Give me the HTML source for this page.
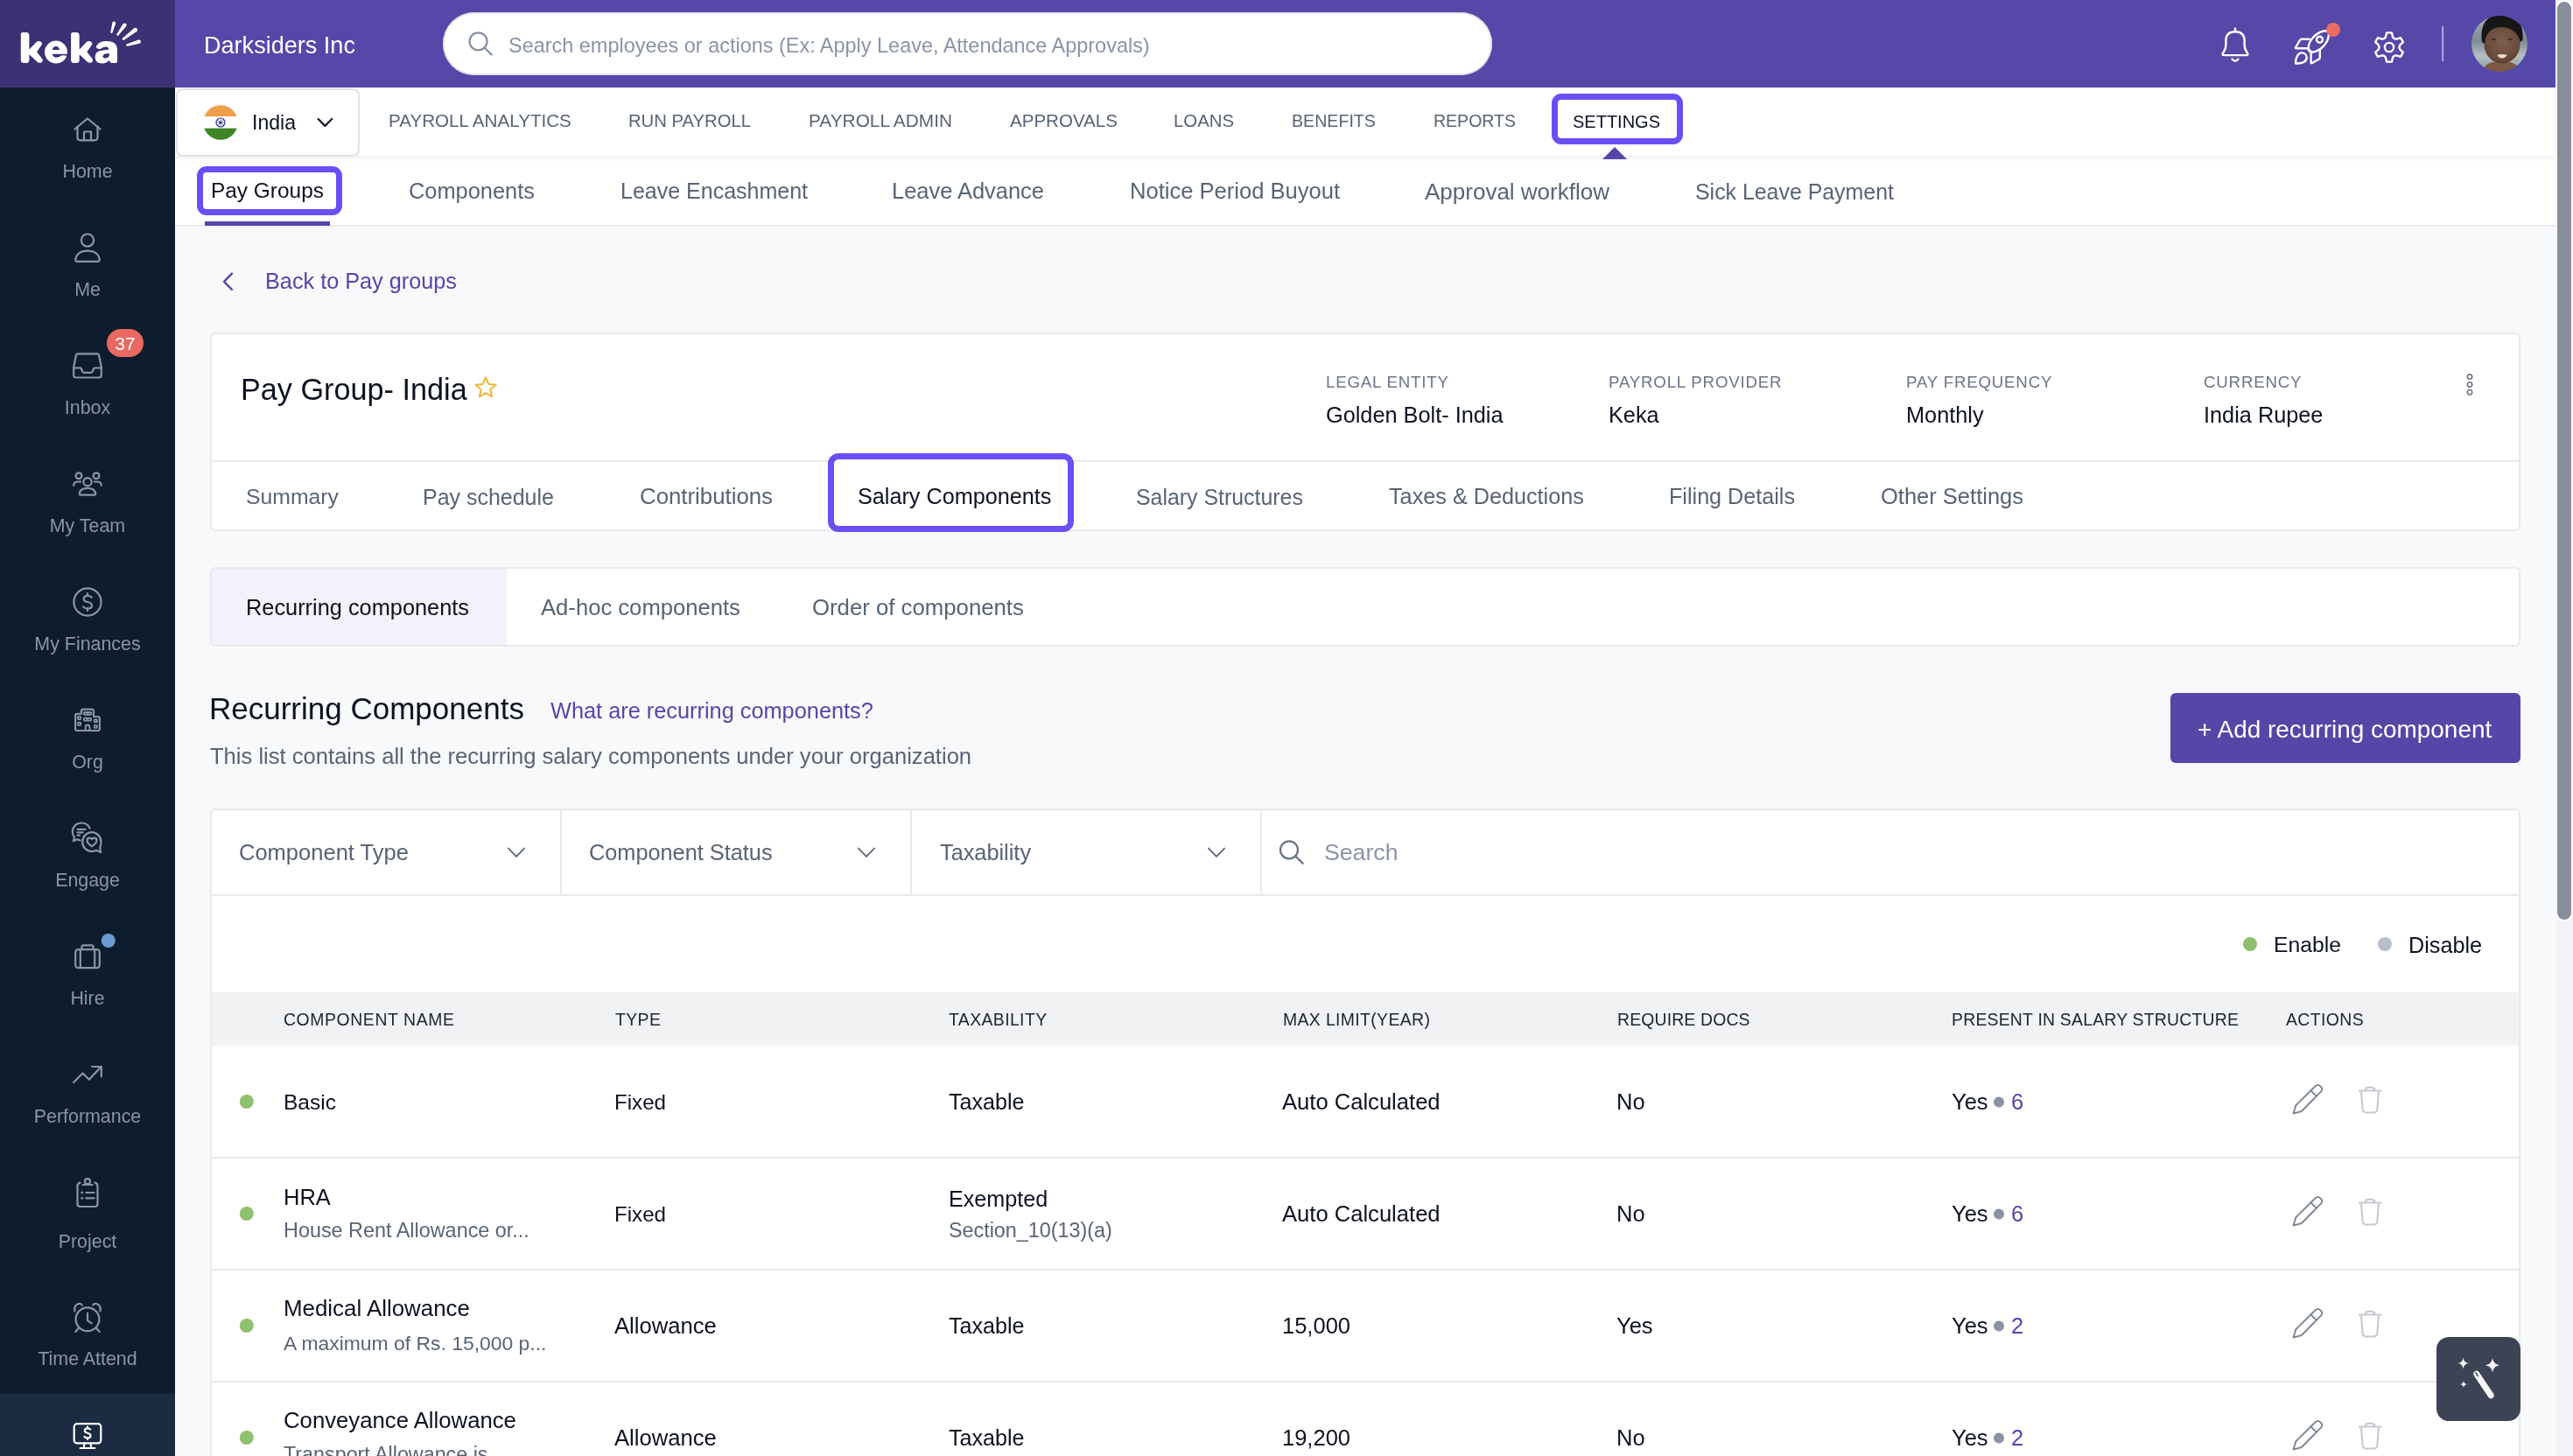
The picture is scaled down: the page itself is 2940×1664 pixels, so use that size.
<!DOCTYPE html>
<html><head><meta charset="utf-8"><title>Keka Payroll Settings</title>
<style>
html,body{margin:0;padding:0;}
body{width:2940px;height:1664px;overflow:hidden;position:relative;font-family:"Liberation Sans",sans-serif;background:#f8f9fb;}
.t{position:absolute;line-height:1;white-space:nowrap;will-change:transform;}
.r{position:absolute;}
.ov{position:absolute;left:0;top:0;z-index:5;pointer-events:none;}
</style></head><body>
<div class="r" style="left:0px;top:0px;width:2940px;height:1664px;background:#f8f9fb;"></div><div class="r" style="left:0px;top:0px;width:200px;height:1664px;background:#0e1d2d;"></div><div class="r" style="left:0px;top:0px;width:200px;height:100px;background:#3c3175;"></div><div class="r" style="left:0px;top:1593px;width:200px;height:71px;background:#1a2b42;"></div><div class="r" style="left:200px;top:0px;width:2720px;height:100px;background:#5548a8;"></div><div class="r" style="left:200px;top:100px;width:2720px;height:78px;background:#ffffff;box-shadow:0 3px 6px rgba(20,30,50,0.07);z-index:1"></div><div class="r" style="left:200px;top:178px;width:2720px;height:81px;background:#ffffff;border-bottom:2px solid #e8eaee;box-sizing:border-box"></div><div class="r" style="left:2920px;top:0px;width:20px;height:1664px;background:#f2f3f6;"></div><div class="r" style="left:2920px;top:0px;width:20px;height:1053px;background:#878e9c;border-radius:10px;border:2px solid #ffffff;box-sizing:border-box"></div><div class="t" style="left:232.8px;top:37.7px;font-size:27.07px;color:#ffffff;">Darksiders Inc</div><div class="r" style="left:506px;top:14px;width:1199px;height:72px;background:#fff;border-radius:36px;box-shadow:inset 0 0 0 1.5px #d9dbe3"></div><div class="t" style="left:581.3px;top:40.7px;font-size:23.46px;color:#8a94a5;">Search employees or actions (Ex: Apply Leave, Attendance Approvals)</div><div class="r" style="left:201px;top:101px;width:210px;height:78px;background:#fff;border:2px solid #dfe1e6;border-radius:8px;box-sizing:border-box;z-index:2"></div><div class="t" style="left:288.0px;top:128.5px;font-size:23.06px;color:#0d1220;z-index:3">India</div><div class="t" style="left:443.5px;top:128.1px;font-size:20.62px;color:#586474;z-index:3">PAYROLL ANALYTICS</div><div class="t" style="left:718.2px;top:128.4px;font-size:20.26px;color:#586474;z-index:3">RUN PAYROLL</div><div class="t" style="left:924.4px;top:128.0px;font-size:20.83px;color:#586474;z-index:3">PAYROLL ADMIN</div><div class="t" style="left:1154.0px;top:128.2px;font-size:20.56px;color:#586474;z-index:3">APPROVALS</div><div class="t" style="left:1341.4px;top:128.4px;font-size:20.35px;color:#586474;z-index:3">LOANS</div><div class="t" style="left:1476.0px;top:129.0px;font-size:19.63px;color:#586474;z-index:3">BENEFITS</div><div class="t" style="left:1637.8px;top:129.1px;font-size:19.52px;color:#586474;z-index:3">REPORTS</div><div class="r" style="left:1773px;top:107px;width:150px;height:58px;border:7.5px solid #6b4ef6;border-radius:11px;box-sizing:border-box;z-index:3"></div><div class="t" style="left:1796.5px;top:128.7px;font-size:20.00px;color:#0d1220;z-index:3">SETTINGS</div><div class="r" style="left:225px;top:190px;width:166px;height:56px;border:7.5px solid #6b4ef6;border-radius:11px;box-sizing:border-box"></div><div class="r" style="left:234px;top:253px;width:143px;height:5px;background:#5546a8;"></div><div class="t" style="left:240.5px;top:206.3px;font-size:24.43px;color:#0d1220;">Pay Groups</div><div class="t" style="left:466.5px;top:206.1px;font-size:25.40px;color:#586474;">Components</div><div class="t" style="left:708.5px;top:206.4px;font-size:25.00px;color:#586474;">Leave Encashment</div><div class="t" style="left:1019.1px;top:206.1px;font-size:25.44px;color:#586474;">Leave Advance</div><div class="t" style="left:1290.7px;top:206.0px;font-size:25.55px;color:#586474;">Notice Period Buyout</div><div class="t" style="left:1628.3px;top:205.6px;font-size:26.00px;color:#586474;">Approval workflow</div><div class="t" style="left:1936.8px;top:206.5px;font-size:24.90px;color:#586474;">Sick Leave Payment</div><div class="t" style="left:303.0px;top:309.0px;font-size:25.26px;color:#5546a8;">Back to Pay groups</div><div class="r" style="left:240px;top:380px;width:2640px;height:227px;background:#fff;border:2px solid #e7e9ed;border-radius:6px;box-sizing:border-box"></div><div class="r" style="left:242px;top:526px;width:2636px;height:2px;background:#e7e9ed;"></div><div class="t" style="left:274.5px;top:427.5px;font-size:34.22px;color:#0d1220;">Pay Group- India</div><div class="t" style="left:1514.6px;top:427.5px;font-size:18.70px;color:#6b7584;letter-spacing:0.8px;">LEGAL ENTITY</div><div class="t" style="left:1514.6px;top:461.8px;font-size:25.30px;color:#0d1220;">Golden Bolt- India</div><div class="t" style="left:1838.0px;top:427.5px;font-size:18.70px;color:#6b7584;letter-spacing:0.8px;">PAYROLL PROVIDER</div><div class="t" style="left:1838.0px;top:461.8px;font-size:25.30px;color:#0d1220;">Keka</div><div class="t" style="left:2178.0px;top:427.5px;font-size:18.70px;color:#6b7584;letter-spacing:0.8px;">PAY FREQUENCY</div><div class="t" style="left:2178.0px;top:461.8px;font-size:25.30px;color:#0d1220;">Monthly</div><div class="t" style="left:2518.0px;top:427.5px;font-size:18.70px;color:#6b7584;letter-spacing:0.8px;">CURRENCY</div><div class="t" style="left:2518.0px;top:461.8px;font-size:25.30px;color:#0d1220;">India Rupee</div><div class="t" style="left:280.7px;top:555.6px;font-size:24.78px;color:#586474;">Summary</div><div class="t" style="left:483.1px;top:555.5px;font-size:24.98px;color:#586474;">Pay schedule</div><div class="t" style="left:730.7px;top:554.8px;font-size:25.80px;color:#586474;">Contributions</div><div class="t" style="left:1298.3px;top:555.5px;font-size:24.90px;color:#586474;">Salary Structures</div><div class="t" style="left:1586.6px;top:555.2px;font-size:25.23px;color:#586474;">Taxes &amp; Deductions</div><div class="t" style="left:1906.8px;top:555.3px;font-size:25.16px;color:#586474;">Filing Details</div><div class="t" style="left:2148.5px;top:555.0px;font-size:25.50px;color:#586474;">Other Settings</div><div class="r" style="left:946.2px;top:518px;width:280.4px;height:90px;background:#fff;border:7.5px solid #6b4ef6;border-radius:12px;box-sizing:border-box"></div><div class="t" style="left:979.5px;top:555.3px;font-size:25.22px;color:#0d1220;">Salary Components</div><div class="r" style="left:240px;top:648px;width:2640px;height:91px;background:#fff;border:2px solid #e7e9ed;border-radius:6px;box-sizing:border-box;overflow:hidden"><div style="position:absolute;left:0;top:0;width:337px;height:100%;background:#f4f0fc"></div></div><div class="t" style="left:281.3px;top:682.3px;font-size:25.35px;color:#0d1220;">Recurring components</div><div class="t" style="left:618.2px;top:682.1px;font-size:25.64px;color:#586474;">Ad-hoc components</div><div class="t" style="left:928.4px;top:682.0px;font-size:25.76px;color:#586474;">Order of components</div><div class="t" style="left:239.0px;top:792.0px;font-size:35.01px;color:#0d1220;">Recurring Components</div><div class="t" style="left:628.5px;top:800.2px;font-size:25.34px;color:#5546a8;">What are recurring components?</div><div class="t" style="left:239.5px;top:852.0px;font-size:25.58px;color:#586474;">This list contains all the recurring salary components under your organization</div><div class="r" style="left:2480px;top:792px;width:400px;height:80px;background:#5546a8;border-radius:6px"></div><div class="t" style="left:2510.5px;top:819.5px;font-size:27.95px;color:#ffffff;">+ Add recurring component</div><div class="r" style="left:240px;top:924px;width:2640px;height:800px;background:#fff;border:2px solid #e7e9ed;border-radius:6px;box-sizing:border-box"></div><div class="r" style="left:242px;top:1022px;width:2636px;height:2px;background:#e7e9ed;"></div><div class="r" style="left:640px;top:926px;width:2px;height:96px;background:#e7e9ed;"></div><div class="r" style="left:1040px;top:926px;width:2px;height:96px;background:#e7e9ed;"></div><div class="r" style="left:1440px;top:926px;width:2px;height:96px;background:#e7e9ed;"></div><div class="t" style="left:273.3px;top:962.1px;font-size:25.53px;color:#586474;">Component Type</div><div class="t" style="left:673.2px;top:962.3px;font-size:25.31px;color:#586474;">Component Status</div><div class="t" style="left:1073.6px;top:962.3px;font-size:25.30px;color:#586474;">Taxability</div><div class="t" style="left:1513.0px;top:961.1px;font-size:26.67px;color:#8a94a5;">Search</div><div class="t" style="left:2598.0px;top:1068.3px;font-size:24.73px;color:#0d1220;">Enable</div><div class="t" style="left:2752.0px;top:1067.9px;font-size:25.19px;color:#0d1220;">Disable</div><div class="r" style="left:242px;top:1134px;width:2636px;height:61px;background:#f1f2f4;"></div><div class="t" style="left:323.9px;top:1156.4px;font-size:19.40px;color:#1c2330;letter-spacing:0.6px;">COMPONENT NAME</div><div class="t" style="left:702.5px;top:1156.4px;font-size:19.40px;color:#1c2330;letter-spacing:0.4px;">TYPE</div><div class="t" style="left:1083.5px;top:1156.4px;font-size:19.40px;color:#1c2330;letter-spacing:0.4px;">TAXABILITY</div><div class="t" style="left:1465.5px;top:1156.4px;font-size:19.40px;color:#1c2330;letter-spacing:0.37px;">MAX LIMIT(YEAR)</div><div class="t" style="left:1847.5px;top:1156.4px;font-size:19.40px;color:#1c2330;letter-spacing:0.16px;">REQUIRE DOCS</div><div class="t" style="left:2229.5px;top:1156.4px;font-size:19.40px;color:#1c2330;letter-spacing:0.22px;">PRESENT IN SALARY STRUCTURE</div><div class="t" style="left:2611.5px;top:1156.4px;font-size:19.40px;color:#1c2330;letter-spacing:0.4px;">ACTIONS</div><div class="t" style="left:323.5px;top:1247.5px;font-size:24.54px;color:#0d1220;">Basic</div><div class="t" style="left:702.0px;top:1248.1px;font-size:24.13px;color:#0d1220;">Fixed</div><div class="t" style="left:1084.0px;top:1247.3px;font-size:25.07px;color:#0d1220;">Taxable</div><div class="t" style="left:1465.0px;top:1246.8px;font-size:25.59px;color:#0d1220;">Auto Calculated</div><div class="t" style="left:1847.0px;top:1246.9px;font-size:25.50px;color:#0d1220;">No</div><div class="t" style="left:2230.0px;top:1246.9px;font-size:25.50px;color:#0d1220;">Yes</div><div class="t" style="left:2298.2px;top:1246.9px;font-size:25.50px;color:#5546a8;">6</div><div class="r" style="left:242px;top:1322px;width:2636px;height:2px;background:#e7e9ed;"></div><div class="t" style="left:323.5px;top:1355.6px;font-size:25.50px;color:#0d1220;">HRA</div><div class="t" style="left:323.5px;top:1395.2px;font-size:23.40px;color:#586474;">House Rent Allowance or...</div><div class="t" style="left:702.0px;top:1376.1px;font-size:24.13px;color:#0d1220;">Fixed</div><div class="t" style="left:1084.0px;top:1357.9px;font-size:25.16px;color:#0d1220;">Exempted</div><div class="t" style="left:1084.0px;top:1395.2px;font-size:23.34px;color:#586474;">Section_10(13)(a)</div><div class="t" style="left:1465.0px;top:1374.8px;font-size:25.59px;color:#0d1220;">Auto Calculated</div><div class="t" style="left:1847.0px;top:1374.9px;font-size:25.50px;color:#0d1220;">No</div><div class="t" style="left:2230.0px;top:1374.9px;font-size:25.50px;color:#0d1220;">Yes</div><div class="t" style="left:2298.2px;top:1374.9px;font-size:25.50px;color:#5546a8;">6</div><div class="r" style="left:242px;top:1450px;width:2636px;height:2px;background:#e7e9ed;"></div><div class="t" style="left:323.5px;top:1483.3px;font-size:25.89px;color:#0d1220;">Medical Allowance</div><div class="t" style="left:323.5px;top:1523.6px;font-size:22.92px;color:#586474;">A maximum of Rs. 15,000 p...</div><div class="t" style="left:702.0px;top:1502.8px;font-size:25.60px;color:#0d1220;">Allowance</div><div class="t" style="left:1084.0px;top:1503.3px;font-size:25.07px;color:#0d1220;">Taxable</div><div class="t" style="left:1465.0px;top:1502.9px;font-size:25.50px;color:#0d1220;">15,000</div><div class="t" style="left:1847.0px;top:1502.9px;font-size:25.50px;color:#0d1220;">Yes</div><div class="t" style="left:2230.0px;top:1502.9px;font-size:25.50px;color:#0d1220;">Yes</div><div class="t" style="left:2298.2px;top:1502.9px;font-size:25.50px;color:#5546a8;">2</div><div class="r" style="left:242px;top:1578px;width:2636px;height:2px;background:#e7e9ed;"></div><div class="t" style="left:323.5px;top:1611.4px;font-size:25.73px;color:#0d1220;">Conveyance Allowance</div><div class="t" style="left:323.5px;top:1651.3px;font-size:23.30px;color:#586474;">Transport Allowance is...</div><div class="t" style="left:702.0px;top:1630.8px;font-size:25.60px;color:#0d1220;">Allowance</div><div class="t" style="left:1084.0px;top:1631.3px;font-size:25.07px;color:#0d1220;">Taxable</div><div class="t" style="left:1465.0px;top:1630.9px;font-size:25.50px;color:#0d1220;">19,200</div><div class="t" style="left:1847.0px;top:1630.9px;font-size:25.50px;color:#0d1220;">No</div><div class="t" style="left:2230.0px;top:1630.9px;font-size:25.50px;color:#0d1220;">Yes</div><div class="t" style="left:2298.2px;top:1630.9px;font-size:25.50px;color:#5546a8;">2</div><div class="t" style="left:0.0px;width:200px;text-align:center;top:185.9px;font-size:21.4px;color:#8a94a4;letter-spacing:0px;">Home</div><div class="t" style="left:0.0px;width:200px;text-align:center;top:320.7px;font-size:21.4px;color:#8a94a4;letter-spacing:0px;">Me</div><div class="t" style="left:0.0px;width:200px;text-align:center;top:455.7px;font-size:21.4px;color:#8a94a4;letter-spacing:0px;">Inbox</div><div class="t" style="left:0.0px;width:200px;text-align:center;top:590.7px;font-size:21.4px;color:#8a94a4;letter-spacing:0px;">My Team</div><div class="t" style="left:0.0px;width:200px;text-align:center;top:725.7px;font-size:21.4px;color:#8a94a4;letter-spacing:0px;">My Finances</div><div class="t" style="left:0.0px;width:200px;text-align:center;top:861.2px;font-size:21.4px;color:#8a94a4;letter-spacing:0px;">Org</div><div class="t" style="left:0.0px;width:200px;text-align:center;top:995.7px;font-size:21.4px;color:#8a94a4;letter-spacing:0px;">Engage</div><div class="t" style="left:0.0px;width:200px;text-align:center;top:1130.7px;font-size:21.4px;color:#8a94a4;letter-spacing:0px;">Hire</div><div class="t" style="left:0.0px;width:200px;text-align:center;top:1265.7px;font-size:21.4px;color:#8a94a4;letter-spacing:0px;">Performance</div><div class="t" style="left:0.0px;width:200px;text-align:center;top:1408.7px;font-size:21.4px;color:#8a94a4;letter-spacing:0px;">Project</div><div class="t" style="left:0.0px;width:200px;text-align:center;top:1543.2px;font-size:21.4px;color:#8a94a4;letter-spacing:0px;">Time Attend</div><div class="r" style="left:122px;top:376px;width:42px;height:32px;background:#e8695f;border-radius:16px"></div><div class="t" style="left:122.0px;width:42px;text-align:center;top:382.2px;font-size:21px;color:#ffffff;letter-spacing:0px;">37</div>
<svg class="ov" width="2940" height="1664" viewBox="0 0 2940 1664"><g fill="none" stroke="#8c95a5" stroke-width="2.2" stroke-linecap="round" stroke-linejoin="round"><path d="M85.5,147.5 L100,135.5 L114.5,147.5"/><path d="M88.5,144.5 V157 Q88.5,160.3 91.8,160.3 H108.2 Q111.5,160.3 111.5,157 V144.5"/><path d="M96,160.3 V150.5 H104 V160.3"/></g><g fill="none" stroke="#8c95a5" stroke-width="2.2" stroke-linecap="round" stroke-linejoin="round"><circle cx="100" cy="274.6" r="7.1"/><path d="M86.3,296.5 C87,290.5 92,286.7 100,286.7 C108,286.7 113,290.5 113.7,296.5 Q114,298.9 111.6,298.9 H88.4 Q86,298.9 86.3,296.5 Z"/></g><g fill="none" stroke="#8c95a5" stroke-width="2.2" stroke-linecap="round" stroke-linejoin="round"><path d="M88.5,404.3 H111.5 Q112.6,404.3 112.9,405.4 L115.8,419.5 V429 Q115.8,431.5 113.3,431.5 H86.7 Q84.2,431.5 84.2,429 V419.5 L87.1,405.4 Q87.4,404.3 88.5,404.3 Z"/><path d="M84.2,420.5 H92.5 L94.2,424.5 Q94.8,425.8 96.2,425.8 H103.8 Q105.2,425.8 105.8,424.5 L107.5,420.5 H115.8"/></g><g fill="none" stroke="#8c95a5" stroke-width="2.2" stroke-linecap="round" stroke-linejoin="round"><circle cx="100" cy="550.8" r="4.6"/><path d="M90.8,564 C91.5,559.5 95,557.8 100,557.8 C105,557.8 108.5,559.5 109.2,564 Q109.4,565.6 107.8,565.6 H92.2 Q90.6,565.6 90.8,564 Z"/><circle cx="90" cy="543.8" r="3.4"/><circle cx="110" cy="543.8" r="3.4"/><path d="M84.2,554.8 Q84.2,550.5 89.5,550.5 H92.2"/><path d="M115.8,554.8 Q115.8,550.5 110.5,550.5 H107.8"/></g><g fill="none" stroke="#8c95a5" stroke-width="2.2" stroke-linecap="round" stroke-linejoin="round"><circle cx="100" cy="688" r="15.6"/><path d="M104.6,682.6 Q103,680.8 100,680.8 Q95.6,680.8 95.6,684.4 Q95.6,687 100.2,688 Q105,689 105,692.2 Q105,695.4 100,695.4 Q96.6,695.4 95,693.4"/><path d="M100,678.2 V680.8 M100,695.4 V698"/></g><g fill="none" stroke="#8c95a5" stroke-width="2.2" stroke-linecap="round" stroke-linejoin="round"><path d="M86.1,832.8 V818 Q86.1,815.8 88.3,815.8 H93 V813 Q93,810.7 95.3,810.7 H104.7 Q107,810.7 107,813 V819 H111.7 Q113.9,819 113.9,821.2 V832.8 Q113.9,835 111.7,835 H88.3 Q86.1,835 86.1,832.8 Z"/></g><g fill="none" stroke="#8c95a5" stroke-width="1.9" stroke-linejoin="round"><rect x="89" y="818.9" width="3.2" height="3.2" rx="0.8"/><rect x="89" y="825.6" width="3.2" height="3.2" rx="0.8"/><rect x="95.9" y="814" width="8.2" height="2.8" rx="0.8"/><rect x="95.9" y="820.7" width="8.2" height="2.9" rx="0.8"/><path d="M100,814 V816.8 M100,820.7 V823.6"/><rect x="107.8" y="822.2" width="3.1" height="3.1" rx="0.8"/><rect x="107.8" y="828.9" width="3.1" height="3" rx="0.8"/><path d="M97.6,835 V831 Q97.6,828.5 100,828.5 Q102.4,828.5 102.4,831 V835"/></g><g fill="none" stroke="#8c95a5" stroke-width="2.2" stroke-linecap="round" stroke-linejoin="round"><path d="M102.5,946.5 C100.8,942.5 97,940.5 93,940.5 C87,940.5 82.8,945 82.8,950.5 C82.8,953 83.6,955.2 85,957 L83.8,961.3 L88.5,959.2 L91.5,960.5"/><path d="M88.5,947.8 H97.5 M88.5,951.4 H94.5 M88.5,954.6 H91"/><path d="M115.5,962.2 C115.5,956 110.7,951.2 105,951.2 C99,951.2 94.2,956 94.2,962.2 C94.2,968.3 99,973 105,973 C107,973 108.7,972.6 110.2,971.7 L115.2,974 L114,968.8 C115,967 115.5,964.7 115.5,962.2 Z"/><path d="M105,967.2 C101,964.8 99.5,962.8 99.5,960.6 C99.5,958.8 100.9,957.6 102.4,957.6 C103.6,957.6 104.4,958.3 105,959.2 C105.6,958.3 106.4,957.6 107.6,957.6 C109.1,957.6 110.5,958.8 110.5,960.6 C110.5,962.8 109,964.8 105,967.2 Z"/></g><g fill="none" stroke="#8c95a5" stroke-width="2.2" stroke-linecap="round" stroke-linejoin="round"><rect x="86.2" y="1085.2" width="27.6" height="21" rx="3.2"/><path d="M93.4,1085 V1082.2 Q93.4,1080.3 95.3,1080.3 H104.7 Q106.6,1080.3 106.6,1082.2 V1085"/><path d="M91.8,1085.5 V1106 M108.2,1085.5 V1106"/></g><circle cx="123.8" cy="1075" r="8" fill="#6a9bd1"/><g fill="none" stroke="#8c95a5" stroke-width="2.2" stroke-linecap="round" stroke-linejoin="round"><path d="M84.2,1237 L94.5,1226.6 L101.8,1233.8 L115.4,1219.2"/><path d="M105.2,1219 H115.8 V1230.3"/></g><g fill="none" stroke="#8c95a5" stroke-width="2.2" stroke-linecap="round" stroke-linejoin="round"><path d="M91.5,1351.6 Q88.5,1352.2 88.5,1355.5 V1375.8 Q88.5,1379 91.7,1379 H108.3 Q111.5,1379 111.5,1375.8 V1355.5 Q111.5,1352.2 108.5,1351.6"/><circle cx="100" cy="1350.2" r="3"/><path d="M94.5,1354 H105.5"/><path d="M98.3,1363 H107.6 M98.3,1369.3 H107.6"/></g><circle cx="93.7" cy="1363" r="1.4" fill="#8c95a5"/><circle cx="93.7" cy="1369.3" r="1.4" fill="#8c95a5"/><g fill="none" stroke="#8c95a5" stroke-width="2.2" stroke-linecap="round" stroke-linejoin="round"><circle cx="100" cy="1507.8" r="13.4"/><path d="M100,1500.6 V1509.2 L104.6,1512.4"/><path d="M85.4,1498.4 Q84,1491.5 90.5,1489.8 Q92.5,1489.6 93.8,1491.5"/><path d="M114.6,1498.4 Q116,1491.5 109.5,1489.8 Q107.5,1489.6 106.2,1491.5"/><path d="M90.4,1517.6 L86.2,1522 M109.6,1517.6 L113.8,1522"/></g><g fill="none" stroke="#ffffff" stroke-width="2.2" stroke-linecap="round" stroke-linejoin="round"><rect x="84.7" y="1627.2" width="30.6" height="22.2" rx="3.4"/><path d="M96.6,1649.6 L95.6,1654.6 M103.4,1649.6 L104.4,1654.6 M91.6,1655 H108.4"/><path d="M103.2,1633.6 Q102.2,1632.3 100,1632.3 Q96.8,1632.3 96.8,1635 Q96.8,1637 100.1,1637.8 Q103.5,1638.6 103.5,1641 Q103.5,1643.3 100,1643.3 Q97.6,1643.3 96.5,1642 M100,1630.6 V1632.3 M100,1643.3 V1645"/></g><g fill="#ffffff"><path d="M26,37.1 H30 Q33.4,37.1 33.4,41 V56.4 L41.4,48.3 Q43.6,46.3 46.3,47.4 Q48.8,48.8 47.6,51.2 L42.1,59.3 L48.4,67.6 Q49.6,70 47.2,71.4 Q44.5,72.6 42.3,70.4 L33.4,62.3 V68.8 Q33.4,71.9 30.3,71.9 H27 Q23.8,71.9 23.8,68.8 V39.3 Q23.8,37.1 26,37.1 Z"/><path transform="translate(57.3,0)" d="M26,37.1 H30 Q33.4,37.1 33.4,41 V56.4 L41.4,48.3 Q43.6,46.3 46.3,47.4 Q48.8,48.8 47.6,51.2 L42.1,59.3 L48.4,67.6 Q49.6,70 47.2,71.4 Q44.5,72.6 42.3,70.4 L33.4,62.3 V68.8 Q33.4,71.9 30.3,71.9 H27 Q23.8,71.9 23.8,68.8 V39.3 Q23.8,37.1 26,37.1 Z"/><ellipse cx="64" cy="59.55" rx="13" ry="12.95"/><path d="M110.3,52.2 Q113.5,47 121.5,47 Q128.5,47 131.6,50 Q134,52.6 134,57 V70 Q134,72 132,72 H127.6 Q126,72 125.5,70.6 L124.8,68.8 Q122,72.4 116.8,72.4 Q108.6,72.4 108.6,65.2 Q108.6,58.8 116,57.8 L124.6,56.6 Q124,53.4 121,53.4 Q117.8,53.4 115.8,55.2 Q114.2,56.6 112,55.8 Q109.2,54.6 110.3,52.2 Z"/></g><g fill="#3c3175"><path d="M59.7,56.9 Q60.5,53.1 63.9,53.1 Q67.3,53.1 68.1,56.9 Z"/><path d="M59.7,61.8 H78 V64.4 Q73.5,62.6 70,63.4 Q67.6,65.7 63.8,65.7 Q60.6,65.5 59.7,61.8 Z"/><path d="M117.6,64.6 Q117.6,61.9 120.6,61.5 L124.8,61 V63.6 Q124,66.6 120.4,66.6 Q117.6,66.6 117.6,64.6 Z"/></g><path d="M128.46,37.28 L132.04,26.89 L128.36,25.91 L126.34,36.72 Z" fill="#fff"/><circle cx="127.4" cy="37" r="1.1" fill="#fff"/><circle cx="130.2" cy="26.4" r="1.9" fill="#fff"/><path d="M135.37,40.31 L144.18,29.89 L140.62,27.31 L133.43,38.89 Z" fill="#fff"/><circle cx="134.4" cy="39.6" r="1.2" fill="#fff"/><circle cx="142.4" cy="28.6" r="2.2" fill="#fff"/><path d="M141.79,45.63 L156.06,36.11 L153.14,32.29 L140.21,43.57 Z" fill="#fff"/><circle cx="141" cy="44.6" r="1.3" fill="#fff"/><circle cx="154.6" cy="34.2" r="2.4" fill="#fff"/><path d="M145.96,52.65 L159.41,49.71 L158.19,45.49 L145.24,50.15 Z" fill="#fff"/><circle cx="145.6" cy="51.4" r="1.3" fill="#fff"/><circle cx="158.8" cy="47.6" r="2.2" fill="#fff"/><g fill="none" stroke="#ffffff" stroke-width="2.4" stroke-linecap="round" stroke-linejoin="round"><path d="M2554,32.6 V35.6"/><path d="M2541.2,63.1 H2566.8 Q2569.2,63.1 2568,60.8 L2566,57.2 Q2564.6,54.5 2564.6,51 V46.5 Q2564.6,36.2 2554,36.2 Q2543.4,36.2 2543.4,46.5 V51 Q2543.4,54.5 2542,57.2 L2540,60.8 Q2538.8,63.1 2541.2,63.1 Z"/><path d="M2550.6,67.6 Q2554,71.6 2557.4,67.6"/></g><g fill="none" stroke="#ffffff" stroke-width="2.4" stroke-linecap="round" stroke-linejoin="round"><path d="M2637.6,56.4 C2637.2,47 2646,36.6 2657,35.3 Q2660.9,35 2661,38.6 C2661,50 2650.5,58.6 2641.2,59.8 Q2638.6,59.6 2637.6,56.4 Z"/><circle cx="2650.5" cy="45.2" r="3.5"/><path d="M2638.8,44.8 H2630 Q2628.6,44.8 2627.9,46 L2623.2,54 Q2622.5,55.3 2624,55.3 H2634.4 Q2638.6,55.6 2641.2,59.8 Q2640.6,61.2 2640.6,62.6 V71.2 Q2640.6,72.8 2642,72 L2649.4,67.8 Q2650.8,67 2650.8,65.4 V57.4"/><path d="M2623,72.6 C2623,66 2625.6,60.4 2630.2,60.4 C2633.4,60.4 2635.7,62.8 2635.7,65.8 C2635.7,70.8 2630,72.6 2623,72.6 Z"/></g><circle cx="2666" cy="34" r="8" fill="#e96d62"/><g fill="none" stroke="#ffffff" stroke-width="2.4" stroke-linecap="round" stroke-linejoin="round"><path d="M2726.02,42.04 L2727.12,37.35 L2732.88,37.35 L2733.98,42.04 Q2735.30,44.82 2738.37,44.58 L2742.98,43.18 L2745.86,48.16 L2742.34,51.47 Q2740.60,54.00 2742.34,56.53 L2745.86,59.84 L2742.98,64.82 L2738.37,63.42 Q2735.30,63.18 2733.98,65.96 L2732.88,70.65 L2727.12,70.65 L2726.02,65.96 Q2724.70,63.18 2721.63,63.42 L2717.02,64.82 L2714.14,59.84 L2717.66,56.53 Q2719.40,54.00 2717.66,51.47 L2714.14,48.16 L2717.02,43.18 L2721.63,44.58 Q2724.70,44.82 2726.02,42.04 Z"/><circle cx="2730" cy="54" r="5.1"/></g><rect x="2790" y="30" width="2.2" height="40" fill="#a99fdb"/><defs><clipPath id="av"><circle cx="2856" cy="50" r="32"/></clipPath><radialGradient id="face" cx="0.5" cy="0.45" r="0.55"><stop offset="0" stop-color="#7f5f4d"/><stop offset="0.8" stop-color="#6a4c3c"/><stop offset="1" stop-color="#5a3f31"/></radialGradient><linearGradient id="avbg" x1="0" y1="0" x2="0" y2="1"><stop offset="0" stop-color="#a9b4ba"/><stop offset="0.45" stop-color="#7d8a94"/><stop offset="0.7" stop-color="#b4bec4"/><stop offset="1" stop-color="#8c979e"/></linearGradient></defs><filter id="avb"><feGaussianBlur stdDeviation="0.7"/></filter><g clip-path="url(#av)"><g filter="url(#avb)"><rect x="2822" y="16" width="68" height="68" fill="url(#avbg)"/><path d="M2836,84 Q2838,73 2848,71 H2868 Q2878,73 2880,84 Z" fill="#7a5a42"/><ellipse cx="2859" cy="50.5" rx="20.5" ry="22" fill="url(#face)"/><path d="M2836,48 Q2832,18 2858,16 Q2885,17 2882.5,46 L2879.5,48 C2878.5,38 2869,31 2858,31 C2847,31 2839.5,38 2839,50 Z" fill="#171312"/><ellipse cx="2849.5" cy="45" rx="3" ry="1.2" fill="#3a2a22" opacity="0.8"/><ellipse cx="2868" cy="45" rx="3" ry="1.2" fill="#3a2a22" opacity="0.8"/><path d="M2853.5,62.5 Q2859,61.5 2864.5,62.5 Q2863,66.5 2859,66.5 Q2855,66.5 2853.5,62.5 Z" fill="#e6ded6"/></g></g><defs><clipPath id="fl"><circle cx="252" cy="140" r="19.8"/></clipPath></defs><g clip-path="url(#fl)"><rect x="232" y="120" width="40" height="13.2" fill="#ef9f4c"/><rect x="232" y="133.2" width="40" height="13.4" fill="#ffffff"/><rect x="232" y="146.6" width="40" height="14" fill="#3e8526"/></g><circle cx="252" cy="140" r="5" fill="none" stroke="#1f2e88" stroke-width="1.2"/><circle cx="252" cy="140" r="1.6" fill="#1f2e88"/><path d="M252,136 V144 M248,140 H256 M249.2,137.2 L254.8,142.8 M254.8,137.2 L249.2,142.8" stroke="#1f2e88" stroke-width="0.7" opacity="0.8"/><path d="M363.6,136 L371.4,143.8 L379.2,136" fill="none" stroke="#1c2330" stroke-width="2.4" stroke-linecap="round" stroke-linejoin="round"/><g fill="none" stroke="#8792a2" stroke-width="2.3" stroke-linecap="round"><circle cx="546.5" cy="47.3" r="10"/><path d="M553.9,54.8 L561.6,62.4"/></g><path d="M1831,182 L1845,168 L1859,182 Z" fill="#5546a8"/><path d="M265,312.6 L256,321.8 L265,331" fill="none" stroke="#5546a8" stroke-width="2.4" stroke-linecap="round" stroke-linejoin="round"/><path d="M555.00,431.30 L558.29,438.97 L566.60,439.73 L560.33,445.23 L562.17,453.37 L555.00,449.10 L547.83,453.37 L549.67,445.23 L543.40,439.73 L551.71,438.97 Z" fill="none" stroke="#f0b33e" stroke-width="2" stroke-linejoin="round"/><g fill="none" stroke="#6b7584" stroke-width="1.6"><circle cx="2822" cy="430.6" r="2.7"/><circle cx="2822" cy="439.4" r="2.7"/><circle cx="2822" cy="448.2" r="2.7"/></g><path d="M581,969.6 L590,978.8 L599,969.6" fill="none" stroke="#5d6878" stroke-width="1.9" stroke-linecap="round" stroke-linejoin="round"/><path d="M981,969.6 L990,978.8 L999,969.6" fill="none" stroke="#5d6878" stroke-width="1.9" stroke-linecap="round" stroke-linejoin="round"/><path d="M1381,969.6 L1390,978.8 L1399,969.6" fill="none" stroke="#5d6878" stroke-width="1.9" stroke-linecap="round" stroke-linejoin="round"/><g fill="none" stroke="#6b7584" stroke-width="2.3" stroke-linecap="round"><circle cx="1473" cy="971.3" r="10"/><path d="M1480.5,978.8 L1488.6,986.6"/></g><circle cx="2571" cy="1079" r="8" fill="#8fc06f"/><circle cx="2725" cy="1079" r="8" fill="#b8bec8"/><circle cx="281.8" cy="1259" r="8" fill="#8fc06f"/><circle cx="2284" cy="1259.6" r="6" fill="#8a93a0"/><g transform="translate(0,0)" fill="none" stroke="#7d8797" stroke-width="2" stroke-linejoin="round" stroke-linecap="round"><path d="M2620.6,1272.6 L2623.2,1263.4 L2645.6,1241.2 Q2648.6,1238.6 2651.4,1241.4 L2652,1242 Q2654.6,1244.8 2652,1247.6 L2629.8,1270 Z"/><path d="M2640.4,1246.4 L2646.6,1252.6"/></g><g transform="translate(0,0)" fill="none" stroke="#c3c9d1" stroke-width="2" stroke-linejoin="round" stroke-linecap="round"><path d="M2695.6,1246.6 H2720.6"/><path d="M2702.2,1246.4 Q2703.4,1242.8 2706.2,1242.8 H2710 Q2712.8,1242.8 2714,1246.4"/><path d="M2698,1247 L2699.6,1267.8 Q2700,1271.4 2703.6,1271.4 H2712.4 Q2716,1271.4 2716.4,1267.8 L2718,1247"/></g><circle cx="281.8" cy="1387" r="8" fill="#8fc06f"/><circle cx="2284" cy="1387.6" r="6" fill="#8a93a0"/><g transform="translate(0,128)" fill="none" stroke="#7d8797" stroke-width="2" stroke-linejoin="round" stroke-linecap="round"><path d="M2620.6,1272.6 L2623.2,1263.4 L2645.6,1241.2 Q2648.6,1238.6 2651.4,1241.4 L2652,1242 Q2654.6,1244.8 2652,1247.6 L2629.8,1270 Z"/><path d="M2640.4,1246.4 L2646.6,1252.6"/></g><g transform="translate(0,128)" fill="none" stroke="#c3c9d1" stroke-width="2" stroke-linejoin="round" stroke-linecap="round"><path d="M2695.6,1246.6 H2720.6"/><path d="M2702.2,1246.4 Q2703.4,1242.8 2706.2,1242.8 H2710 Q2712.8,1242.8 2714,1246.4"/><path d="M2698,1247 L2699.6,1267.8 Q2700,1271.4 2703.6,1271.4 H2712.4 Q2716,1271.4 2716.4,1267.8 L2718,1247"/></g><circle cx="281.8" cy="1515" r="8" fill="#8fc06f"/><circle cx="2284" cy="1515.6" r="6" fill="#8a93a0"/><g transform="translate(0,256)" fill="none" stroke="#7d8797" stroke-width="2" stroke-linejoin="round" stroke-linecap="round"><path d="M2620.6,1272.6 L2623.2,1263.4 L2645.6,1241.2 Q2648.6,1238.6 2651.4,1241.4 L2652,1242 Q2654.6,1244.8 2652,1247.6 L2629.8,1270 Z"/><path d="M2640.4,1246.4 L2646.6,1252.6"/></g><g transform="translate(0,256)" fill="none" stroke="#c3c9d1" stroke-width="2" stroke-linejoin="round" stroke-linecap="round"><path d="M2695.6,1246.6 H2720.6"/><path d="M2702.2,1246.4 Q2703.4,1242.8 2706.2,1242.8 H2710 Q2712.8,1242.8 2714,1246.4"/><path d="M2698,1247 L2699.6,1267.8 Q2700,1271.4 2703.6,1271.4 H2712.4 Q2716,1271.4 2716.4,1267.8 L2718,1247"/></g><circle cx="281.8" cy="1643" r="8" fill="#8fc06f"/><circle cx="2284" cy="1643.6" r="6" fill="#8a93a0"/><g transform="translate(0,384)" fill="none" stroke="#7d8797" stroke-width="2" stroke-linejoin="round" stroke-linecap="round"><path d="M2620.6,1272.6 L2623.2,1263.4 L2645.6,1241.2 Q2648.6,1238.6 2651.4,1241.4 L2652,1242 Q2654.6,1244.8 2652,1247.6 L2629.8,1270 Z"/><path d="M2640.4,1246.4 L2646.6,1252.6"/></g><g transform="translate(0,384)" fill="none" stroke="#c3c9d1" stroke-width="2" stroke-linejoin="round" stroke-linecap="round"><path d="M2695.6,1246.6 H2720.6"/><path d="M2702.2,1246.4 Q2703.4,1242.8 2706.2,1242.8 H2710 Q2712.8,1242.8 2714,1246.4"/><path d="M2698,1247 L2699.6,1267.8 Q2700,1271.4 2703.6,1271.4 H2712.4 Q2716,1271.4 2716.4,1267.8 L2718,1247"/></g><rect x="2784" y="1528" width="96" height="96" rx="14" fill="#3c4354"/><path d="M2848,1552.3 Q2849.2,1559.1 2856,1560.3 Q2849.2,1561.5 2848,1568.3 Q2846.8,1561.5 2840,1560.3 Q2846.8,1559.1 2848,1552.3 Z M2814.6,1551.4 Q2815.15,1557.45 2821.2,1558 Q2815.15,1558.55 2814.6,1564.6 Q2814.0499999999997,1558.55 2808.0,1558 Q2814.0499999999997,1557.45 2814.6,1551.4 Z M2815,1578 Q2815.4,1581.6 2819,1582 Q2815.4,1582.4 2815,1586 Q2814.6,1582.4 2811,1582 Q2814.6,1581.6 2815,1578 Z" fill="#f6f7f9"/><path d="M2829.8,1570.2 L2846.2,1594.8" stroke="#f6f7f9" stroke-width="7" stroke-linecap="round"/><path d="M2828.8,1568.8 L2831.4,1572.6" stroke="#3c4354" stroke-width="1.6" stroke-linecap="round"/></svg>
</body></html>
